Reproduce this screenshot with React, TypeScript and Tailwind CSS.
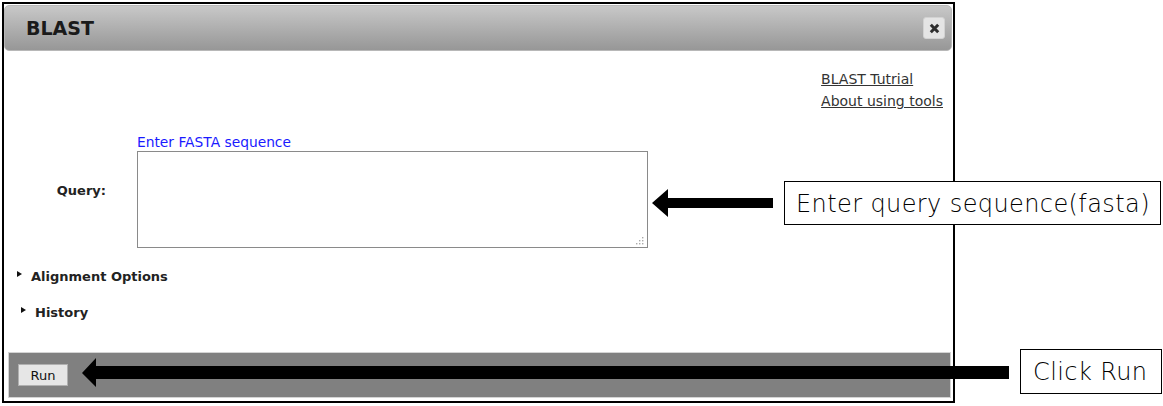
import React from "react";

function Tri() {
  return (
    <span className="mt-[4px] block h-0 w-0 border-y-[3.5px] border-l-[5px] border-y-transparent border-l-[#111]" />
  );
}

export default function App() {
  return (
    <div className="relative h-[406px] w-[1163px] overflow-hidden bg-white font-['DejaVu_Sans',sans-serif] text-[#222]">
      <div className="pl-[2px] pt-[2px]">
        <div className="flex h-[401px] w-[953px] flex-col border-2 border-black">
          {/* header */}
          <div className="ml-0 mr-[1px] mt-[1px] flex h-[46px] items-center justify-between rounded-[5px] border border-[#b8b8b8] bg-gradient-to-b from-[#c8c8c8] to-[#979797] pl-[21px] pr-[6px]">
            <span className="text-[19px] font-bold leading-none text-[#1a1a1a]">BLAST</span>
            <button className="flex h-[22px] w-[22px] items-center justify-center rounded-[3px] border border-[#d2d2d2] bg-[#e4e4e4]">
              <svg width="11" height="11" viewBox="0 0 11 11">
                <path d="M1.8 1.8 L9.2 9.2 M9.2 1.8 L1.8 9.2" stroke="#2e2e2e" strokeWidth="3" strokeLinecap="butt" />
              </svg>
            </button>
          </div>

          {/* links */}
          <div className="mr-[10px] mt-[17px] flex flex-col items-start self-end text-[14px] leading-[22px] text-[#333]">
            <a className="underline" href="#">BLAST Tutrial</a>
            <a className="underline" href="#">About using tools</a>
          </div>

          {/* query row */}
          <div className="mt-[21px] flex items-center">
            <div className="w-[133px] pr-[31px] text-right text-[13px] font-bold leading-[18px]">Query:</div>
            <div className="flex flex-col">
              <span className="text-[13.8px] leading-[18px] text-[#1a1aff]">Enter FASTA sequence</span>
              <div className="relative h-[97px] w-[511px] border border-[#8a8a8a] bg-white">
                <svg className="absolute bottom-[2px] right-[3px]" width="9" height="9" viewBox="0 0 9 9">
                  <rect x="7" y="1" width="1.4" height="1.4" fill="#aaa" />
                  <rect x="4" y="4" width="1.4" height="1.4" fill="#aaa" />
                  <rect x="7" y="4" width="1.4" height="1.4" fill="#aaa" />
                  <rect x="1" y="7" width="1.4" height="1.4" fill="#aaa" />
                  <rect x="4" y="7" width="1.4" height="1.4" fill="#aaa" />
                  <rect x="7" y="7" width="1.4" height="1.4" fill="#aaa" />
                </svg>
              </div>
            </div>
          </div>

          {/* collapsibles */}
          <div className="mt-[19px] flex items-start gap-[9px] pl-[13px] text-[13px] font-bold leading-[20px]">
            <Tri />
            <span>Alignment Options</span>
          </div>
          <div className="mt-[16px] flex items-start gap-[9px] pl-[17px] text-[13px] font-bold leading-[20px]">
            <Tri />
            <span>History</span>
          </div>

          {/* footer */}
          <div className="mb-[3px] ml-[4px] mr-[2px] mt-auto flex h-[46px] items-center border border-[#d4d4d4] bg-[#808080] pl-[9px]">
            <button className="h-[22px] w-[50px] border border-[#b0b0b0] bg-[#e6e6e6] text-[13px] leading-none text-[#111]">
              Run
            </button>
          </div>
        </div>
      </div>

      {/* annotation arrows */}
      <svg className="absolute left-0 top-0" width="1163" height="406">
        <polygon points="652,203 668,189 668,198 773,198 773,208 668,208 668,217" fill="#000" />
        <polygon points="82,373 96,358 96,366 1009,366 1009,379 96,379 96,387" fill="#000" />
      </svg>

      {/* annotation boxes */}
      <div className="absolute left-[784px] top-[181px] flex h-[44px] w-[377px] items-center border border-black bg-white pl-[11px] pt-[1px] font-['DejaVu_Sans',sans-serif] text-[24px] font-extralight tracking-[0.4px] text-black">
        Enter query sequence(fasta)
      </div>
      <div className="absolute left-[1020px] top-[349px] flex h-[45px] w-[142px] items-center border border-black bg-white pl-[12px] pt-[1px] font-['DejaVu_Sans',sans-serif] text-[24px] font-extralight tracking-[0.4px] text-black">
        Click Run
      </div>
    </div>
  );
}
